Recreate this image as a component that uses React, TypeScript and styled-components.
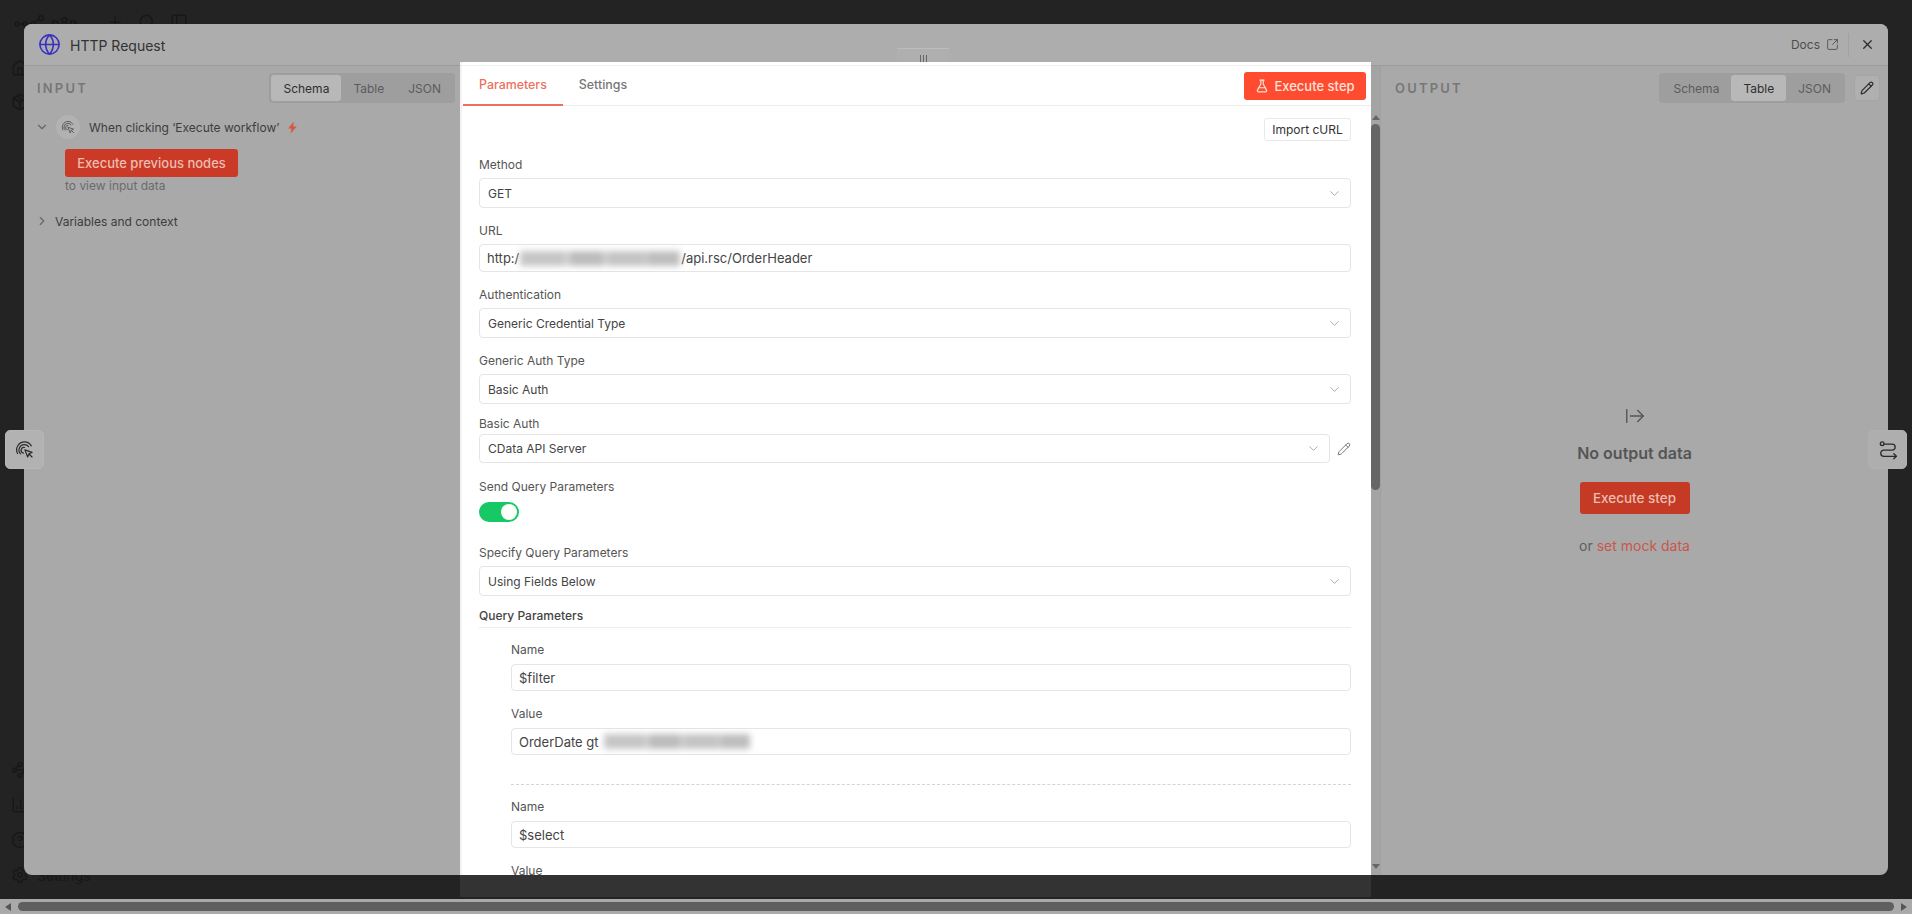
import React from 'react';
import styled, { createGlobalStyle } from 'styled-components';
import {
  ArrowRightFromLine,
  BarChart3,
  ChevronDown,
  ChevronRight,
  CircleHelp,
  FlaskConical,
  Globe,
  Home,
  Package,
  PanelLeft,
  Pencil,
  Plus,
  Search,
  Settings,
  SquareArrowOutUpRight,
  Waypoints,
  X,
} from 'lucide-react';

const Global = createGlobalStyle`
  html, body { margin: 0; padding: 0; height: 100%; overflow: hidden; background: #232323; }
  body { font-family: Inter, "Liberation Sans", sans-serif; }
  * { box-sizing: border-box; }
`;

const Page = styled.div`
  width: 1912px;
  height: 914px;
  display: flex;
  flex-direction: column;
  overflow: hidden;
`;

const Stage = styled.div`
  position: relative;
  flex: 1;
  background: #232323;
`;

/* dimmed application behind the modal */
const Sidebar = styled.aside`
  width: 200px;
  height: 100%;
  padding: 12px 0 15px 11px;
  display: flex;
  flex-direction: column;
  color: #181818;
`;

const SideTop = styled.div`
  display: flex;
  align-items: center;
  height: 20px;
  gap: 14px;
`;

const Brand = styled.div`
  display: flex;
  align-items: center;
  gap: 3px;
  width: 81px;
  padding-left: 3px;
  font-size: 14px;
  font-weight: 700;
`;

const SideNav = styled.nav`
  margin-top: 27px;
  display: flex;
  flex-direction: column;
  gap: 16px;
`;

const SideBottom = styled.nav`
  margin-top: auto;
  display: flex;
  flex-direction: column;
  gap: 17px;
`;

const SideItem = styled.div`
  display: flex;
  align-items: center;
  gap: 8px;
  height: 18px;
  font-size: 14px;
`;

/* modal */
const Modal = styled.section`
  position: absolute;
  left: 24px;
  top: 24px;
  right: 24px;
  bottom: 24px;
  display: flex;
  flex-direction: column;
  background: #a9a9a9;
  border-radius: 8px;
`;

const ModalHeader = styled.header`
  height: 42px;
  flex: none;
  display: flex;
  align-items: center;
  padding: 0 13px 0 14px;
  background: #adadad;
  border-bottom: 1px solid #9b9b9b;
  border-radius: 8px 8px 0 0;
`;

const ModalTitle = styled.h1`
  margin: 1px 0 0 9px;
  font-size: 14px;
  font-weight: 400;
  color: #333;
  flex: 1;
`;

const DocsLink = styled.a`
  display: flex;
  align-items: center;
  gap: 6px;
  font-size: 12px;
  color: #4d4d4d;
`;

const HeaderRule = styled.span`
  width: 1px;
  height: 24px;
  background: #a2a2a2;
  margin: 0 11px 0 9px;
`;

const ModalBody = styled.div`
  flex: 1;
  display: flex;
  min-height: 0;
`;

const SidePanel = styled.div`
  width: 436px;
  flex: none;
  display: flex;
  flex-direction: column;
`;

const OutputPanel = styled.div`
  flex: 1;
  display: flex;
  flex-direction: column;
`;

const PanelHead = styled.div<{ $right?: boolean }>`
  display: flex;
  align-items: center;
  justify-content: space-between;
  height: 30px;
  margin-top: 7px;
  padding: ${(p) => (p.$right ? '0 8px 0 14px' : '0 5px 0 13px')};
`;

const PanelLabel = styled.div`
  font-size: 13px;
  font-weight: 600;
  letter-spacing: 2.2px;
  color: #777;
`;

const HeadTools = styled.div`
  display: flex;
  align-items: center;
  gap: 9px;
`;

const Segmented = styled.div`
  display: flex;
  height: 30px;
  padding: 2px;
  background: #9e9e9e;
  border-radius: 4px;
`;

const Segment = styled.button<{ $active?: boolean }>`
  height: 26px;
  padding: 0 12px;
  border: 0;
  border-radius: 3px;
  font: 400 12px Inter, sans-serif;
  background: ${(p) => (p.$active ? '#b8b8b8' : 'transparent')};
  color: ${(p) => (p.$active ? '#2f2f2f' : '#5c5c5c')};
`;

const IconButton = styled.button`
  width: 26px;
  height: 26px;
  display: flex;
  align-items: center;
  justify-content: center;
  border: 1px solid #a6a6a6;
  border-radius: 4px;
  padding: 0;
  background: #b0b0b0;
  color: #2d2d2d;
`;

const TreeRow = styled.div<{ $top: number }>`
  display: flex;
  align-items: center;
  height: 24px;
  margin-top: ${(p) => p.$top}px;
  padding-left: 11px;
  font-size: 12px;
  color: #3d3d3d;
`;

const Caret = styled.span`
  display: flex;
  width: 14px;
  margin-right: 7px;
  color: #666;
`;

const CaretTight = styled(Caret)`
  margin-right: 6px;
`;

const NodeBadge = styled.span`
  width: 24px;
  height: 24px;
  border-radius: 50%;
  background: #b2b2b2;
  display: flex;
  align-items: center;
  justify-content: center;
  margin-right: 9px;
  color: #555;
`;

const Bolt = styled.span`
  display: flex;
  margin-left: 7px;
  color: #d9573f;
`;

const DimButton = styled.button`
  display: block;
  height: 28px;
  padding: 0 12px;
  border: 0;
  border-radius: 3px;
  background: #cb3a26;
  color: #edbdb1;
  font: 500 13px Inter, sans-serif;
`;

const RunPrevious = styled(DimButton)`
  margin: 10px 0 0 41px;
  width: 173px;
  padding: 0;
`;

const Hint = styled.div`
  margin: 1px 0 0 41px;
  font-size: 12px;
  line-height: 16px;
  color: #6b6b6b;
`;

const Empty = styled.div`
  flex: 1;
  display: flex;
  flex-direction: column;
  align-items: center;
  padding-top: 302px;
  color: #555;
`;

const EmptyTitle = styled.div`
  margin-top: 16px;
  font-size: 16px;
  font-weight: 600;
  line-height: 20px;
  color: #555;
`;

const RunStep = styled(DimButton)`
  margin-top: 19px;
  width: 110px;
  height: 32px;
  padding: 0;
  background: #c43a24;
  font-size: 13.5px;
`;

const MockRow = styled.div`
  margin-top: 23px;
  font-size: 14px;
  line-height: 18px;
  color: #5e5e5e;
`;

const MockLink = styled.span`
  color: #c9574b;
`;

/* center panel */
const Gutter = styled.div`
  position: relative;
  width: 921px;
  flex: none;
  border-right: 1px solid #a0a0a0;
  background: #a4a4a4;
`;

const ParamPanel = styled.div`
  position: absolute;
  left: 0;
  top: -4px;
  width: 911px;
  height: 813px;
  display: flex;
  flex-direction: column;
  background: #fff;
  border-left: 2px solid #f3f3f3;
  z-index: 2;

  &::after {
    content: '';
    position: absolute;
    left: -2px;
    right: 0;
    top: 100%;
    height: 22px;
    background: #333;
  }
`;

const DragHandle = styled.div`
  position: absolute;
  left: 435px;
  top: -14px;
  width: 52px;
  height: 14px;
  display: flex;
  justify-content: center;
  gap: 2px;
  padding-top: 6px;
  background: #afafaf;
  border-top: 1px solid #bcbcbc;
`;

const HandleBar = styled.span`
  width: 1px;
  height: 7px;
  background: #666;
`;

const ParamHead = styled.div`
  height: 44px;
  flex: none;
  display: flex;
  align-items: stretch;
  padding: 3px 0 0 1px;
  border-bottom: 1px solid #ececec;
  position: relative;

  &::before {
    content: '';
    position: absolute;
    left: 0;
    right: 0;
    top: 3px;
    height: 1px;
    background: #f1f1f1;
  }
`;

const ParamTab = styled.div<{ $active?: boolean }>`
  display: flex;
  align-items: center;
  padding: 0 16px;
  margin-bottom: -1px;
  font-size: 12.4px;
  font-weight: 500;
  color: ${(p) => (p.$active ? '#ee6f5d' : '#777')};
  border-bottom: 2px solid ${(p) => (p.$active ? '#ee6f5d' : 'transparent')};
`;

const ExecuteButton = styled.button`
  margin: 7px 5px 0 auto;
  width: 122px;
  height: 28px;
  display: flex;
  align-items: center;
  justify-content: center;
  gap: 5px;
  border: 0;
  border-radius: 3px;
  background: #ff4b2f;
  color: #fde3dc;
  font: 500 13px Inter, sans-serif;
`;

const Form = styled.div`
  flex: 1;
  min-height: 0;
  overflow: hidden;
  padding: 12px 20px 0 17px;
  display: flex;
  flex-direction: column;
`;

const ImportRow = styled.div`
  display: flex;
  justify-content: flex-end;
`;

const ImportButton = styled.button`
  width: 87px;
  height: 23px;
  padding: 0;
  border: 1px solid #e8e8e8;
  border-radius: 3px;
  background: #fff;
  color: #333;
  font: 400 12px Inter, sans-serif;
`;

const Label = styled.label<{ $top: number; $gap?: number; $indent?: boolean; $strong?: boolean }>`
  display: block;
  flex: none;
  height: 18px;
  line-height: 18px;
  font-size: 12px;
  margin-top: ${(p) => p.$top}px;
  margin-bottom: ${(p) => p.$gap ?? 4}px;
  margin-left: ${(p) => (p.$indent ? 32 : 0)}px;
  font-weight: ${(p) => (p.$strong ? 500 : 400)};
  color: ${(p) => (p.$strong ? '#444' : '#555')};
`;

const Control = styled.div<{ $h: number; $indent?: boolean; $inputText?: boolean }>`
  flex: 1;
  flex-shrink: 0;
  display: flex;
  align-items: center;
  min-height: ${(p) => p.$h}px;
  max-height: ${(p) => p.$h}px;
  margin-left: ${(p) => (p.$indent ? 32 : 0)}px;
  padding: 0 9px 0 ${(p) => (p.$inputText ? 7 : 8)}px;
  border: 1px solid #e5e5e5;
  border-radius: 4px;
  background: #fff;
  font-size: ${(p) => (p.$inputText ? 13 : 12)}px;
  color: #444;
`;

const ControlText = styled.span`
  flex: 1;
  display: flex;
  align-items: center;
`;

const Blurred = styled.span<{ $w: number; $left: number }>`
  width: ${(p) => p.$w}px;
  height: 15px;
  margin: 0 1px 0 ${(p) => p.$left}px;
  background: linear-gradient(
    90deg,
    #c6c6c6 0 28%,
    #d6d6d6 28% 31%,
    #bcbcbc 31% 52%,
    #d2d2d2 52% 55%,
    #c4c4c4 55% 78%,
    #cfcfcf 78% 80%,
    #bebebe 80% 100%
  );
  filter: blur(3.2px);
`;

const ChevronSlot = styled.span`
  display: flex;
  color: #999;
  margin-right: -1px;
`;

const WithAction = styled.div`
  display: flex;
  align-items: center;
  gap: 7px;
  flex: none;
`;

const ActionIcon = styled.span`
  display: flex;
  color: #666;
`;

const Toggle = styled.div`
  flex: none;
  width: 40px;
  height: 20px;
  display: flex;
  justify-content: flex-end;
  align-items: center;
  padding-right: 2px;
  border-radius: 10px;
  background: #17c964;
`;

const Knob = styled.span`
  width: 16px;
  height: 16px;
  border-radius: 50%;
  background: #fff;
`;

const SectionRule = styled.div`
  flex: none;
  height: 1px;
  margin-top: -2px;
  background: #ececec;
`;

const DashRule = styled.div`
  flex: none;
  margin: 29px 0 0 32px;
  border-top: 1px dashed #d4d4d4;
`;

const ScrollRail = styled.div`
  position: absolute;
  top: 53px;
  right: -9px;
  width: 9px;
  bottom: 6px;
  display: flex;
  flex-direction: column;
  align-items: center;
`;

const RailArrow = styled.span<{ $down?: boolean }>`
  width: 0;
  height: 0;
  flex: none;
  border-left: 4px solid transparent;
  border-right: 4px solid transparent;
  border-bottom: ${(p) => (p.$down ? 0 : '5px solid #666')};
  border-top: ${(p) => (p.$down ? '5px solid #666' : 0)};
`;

const RailThumb = styled.span`
  width: 9px;
  height: 366px;
  margin: 4px 0 auto;
  background: #666;
  border-radius: 5px;
`;

const FloatHandle = styled.button<{ $side: 'left' | 'right' }>`
  position: absolute;
  top: 430px;
  ${(p) => (p.$side === 'left' ? 'left: 5px;' : 'right: 5px;')}
  width: 39px;
  height: 39px;
  display: flex;
  align-items: center;
  justify-content: center;
  padding: 0;
  border: 1px solid ${(p) => (p.$side === 'left' ? '#b6b6b6' : '#b0b0b0')};
  border-radius: 5px;
  background: ${(p) => (p.$side === 'left' ? '#b2b2b2' : '#aeaeae')};
  color: #2b2b2b;
  z-index: 3;
`;

/* page scrollbar */
const HBar = styled.div`
  flex: none;
  height: 15px;
  display: flex;
  align-items: center;
  padding: 0 5px;
  background: #a9a9a9;
  gap: 5px;
`;

const HArrow = styled.span<{ $right?: boolean }>`
  width: 0;
  height: 0;
  flex: none;
  border-top: 4px solid transparent;
  border-bottom: 4px solid transparent;
  border-right: ${(p) => (p.$right ? 0 : '6px solid #555')};
  border-left: ${(p) => (p.$right ? '6px solid #555' : 0)};
`;

const HThumb = styled.span`
  flex: 1;
  height: 9px;
  margin: 0 2px;
  background: #5f5f5f;
  border-radius: 5px;
`;

const TriggerIcon = ({ size, weight = 1.6 }: { size: number; weight?: number }) => (
  <svg width={size} height={size} viewBox="0 0 24 24" fill="none" stroke="currentColor" strokeWidth={weight} strokeLinecap="round" strokeLinejoin="round">
    <path d="M3.2 17a10 10 0 0 1 8.8-14.6 10 10 0 0 1 8.6 5" />
    <path d="M7 17.5a6.8 6.8 0 0 1 5-11.6 6.8 6.8 0 0 1 5.2 2.6" />
    <path d="M10.6 16.5a3.4 3.4 0 0 1 1.4-7" />
    <path d="m12.5 12.5 9 3.2-3.8 1.7-1.7 4z" />
    <path d="m18 18 3.5 3.5" />
  </svg>
);

const RouteIcon = () => (
  <svg width={20} height={20} viewBox="0 0 24 24" fill="none" stroke="currentColor" strokeWidth={1.6} strokeLinecap="round" strokeLinejoin="round">
    <circle cx="5" cy="4.5" r="2.2" />
    <path d="M8 5h9a3.6 3.6 0 0 1 0 7.2H7a3.7 3.7 0 0 0 0 7.4h15" />
    <path d="m19 16.5 3 3-3 3" />
  </svg>
);

const BoltIcon = () => (
  <svg width={13} height={13} viewBox="0 0 12 12" fill="currentColor">
    <path d="M7.2 0.5 2 7h3L4.2 11.5 10 5H6.7z" />
  </svg>
);

const LogoMark = () => (
  <svg width={34} height={16} viewBox="0 0 34 16" fill="none" stroke="currentColor" strokeWidth={1.6}>
    <circle cx="3" cy="10" r="2" />
    <circle cx="11" cy="10" r="2" />
    <circle cx="19" cy="10" r="2" />
    <circle cx="27" cy="4" r="2.4" />
    <path d="M5 10h4M13 10h4M20.5 8.6 25 5" />
  </svg>
);

const Chevron = () => (
  <ChevronSlot>
    <ChevronDown size={15} strokeWidth={1.3} />
  </ChevronSlot>
);

export default function App() {
  return (
    <Page>
      <Global />
      <Stage>
        <Sidebar>
          <SideTop>
            <Brand>
              <LogoMark />
              n8n
            </Brand>
            <Plus size={18} />
            <Search size={18} />
            <PanelLeft size={18} />
          </SideTop>
          <SideNav>
            <SideItem>
              <Home size={18} />
            </SideItem>
            <SideItem>
              <Package size={18} />
            </SideItem>
          </SideNav>
          <SideBottom>
            <SideItem>
              <Waypoints size={18} />
            </SideItem>
            <SideItem>
              <BarChart3 size={18} />
            </SideItem>
            <SideItem>
              <CircleHelp size={18} />
            </SideItem>
            <SideItem>
              <Settings size={18} />
              Settings
            </SideItem>
          </SideBottom>
        </Sidebar>

        <FloatHandle $side="left">
          <TriggerIcon size={19} weight={1.5} />
        </FloatHandle>
        <FloatHandle $side="right">
          <RouteIcon />
        </FloatHandle>

        <Modal>
          <ModalHeader>
            <Globe size={23} color="#3a31c4" strokeWidth={1.7} />
            <ModalTitle>HTTP Request</ModalTitle>
            <DocsLink>
              Docs
              <SquareArrowOutUpRight size={13} strokeWidth={1.6} />
            </DocsLink>
            <HeaderRule />
            <X size={15} color="#2a2a2a" />
          </ModalHeader>
          <ModalBody>
            <SidePanel>
              <PanelHead>
                <PanelLabel>INPUT</PanelLabel>
                <Segmented>
                  <Segment $active>Schema</Segment>
                  <Segment>Table</Segment>
                  <Segment>JSON</Segment>
                </Segmented>
              </PanelHead>
              <TreeRow $top={12}>
                <Caret>
                  <ChevronDown size={14} />
                </Caret>
                <NodeBadge>
                  <TriggerIcon size={14} />
                </NodeBadge>
                When clicking ‘Execute workflow’
                <Bolt>
                  <BoltIcon />
                </Bolt>
              </TreeRow>
              <RunPrevious>Execute previous nodes</RunPrevious>
              <Hint>to view input data</Hint>
              <TreeRow $top={15}>
                <CaretTight>
                  <ChevronRight size={14} />
                </CaretTight>
                Variables and context
              </TreeRow>
            </SidePanel>

            <Gutter>
              <ParamPanel>
                <DragHandle>
                  <HandleBar />
                  <HandleBar />
                  <HandleBar />
                </DragHandle>
                <ParamHead>
                  <ParamTab $active>Parameters</ParamTab>
                  <ParamTab>Settings</ParamTab>
                  <ExecuteButton>
                    <FlaskConical size={14} />
                    Execute step
                  </ExecuteButton>
                </ParamHead>
                <Form>
                  <ImportRow>
                    <ImportButton>Import cURL</ImportButton>
                  </ImportRow>

                  <Label $top={15}>Method</Label>
                  <Control $h={30}>
                    <ControlText>GET</ControlText>
                    <Chevron />
                  </Control>

                  <Label $top={14}>URL</Label>
                  <Control $h={28} $inputText>
                    <ControlText>
                      http:/
                      <Blurred $w={160} $left={1} />
                      /api.rsc/OrderHeader
                    </ControlText>
                  </Control>

                  <Label $top={14}>Authentication</Label>
                  <Control $h={30}>
                    <ControlText>Generic Credential Type</ControlText>
                    <Chevron />
                  </Control>

                  <Label $top={14}>Generic Auth Type</Label>
                  <Control $h={30}>
                    <ControlText>Basic Auth</ControlText>
                    <Chevron />
                  </Control>

                  <Label $top={11} $gap={1}>Basic Auth</Label>
                  <WithAction>
                    <Control $h={29}>
                      <ControlText>CData API Server</ControlText>
                      <Chevron />
                    </Control>
                    <ActionIcon>
                      <Pencil size={14} strokeWidth={1.5} />
                    </ActionIcon>
                  </WithAction>

                  <Label $top={15} $gap={6}>Send Query Parameters</Label>
                  <Toggle>
                    <Knob />
                  </Toggle>

                  <Label $top={22}>Specify Query Parameters</Label>
                  <Control $h={30}>
                    <ControlText>Using Fields Below</ControlText>
                    <Chevron />
                  </Control>

                  <Label $top={11} $strong>Query Parameters</Label>
                  <SectionRule />

                  <Label $top={13} $gap={5} $indent>Name</Label>
                  <Control $h={27} $indent $inputText>
                    <ControlText>$filter</ControlText>
                  </Control>

                  <Label $top={14} $gap={5} $indent>Value</Label>
                  <Control $h={27} $indent $inputText>
                    <ControlText>
                      OrderDate gt
                      <Blurred $w={146} $left={5} />
                    </ControlText>
                  </Control>

                  <DashRule />

                  <Label $top={13} $gap={5} $indent>Name</Label>
                  <Control $h={27} $indent $inputText>
                    <ControlText>$select</ControlText>
                  </Control>

                  <Label $top={14} $indent>Value</Label>
                </Form>
                <ScrollRail>
                  <RailArrow />
                  <RailThumb />
                  <RailArrow $down />
                </ScrollRail>
              </ParamPanel>
            </Gutter>

            <OutputPanel>
              <PanelHead $right>
                <PanelLabel>OUTPUT</PanelLabel>
                <HeadTools>
                  <Segmented>
                    <Segment>Schema</Segment>
                    <Segment $active>Table</Segment>
                    <Segment>JSON</Segment>
                  </Segmented>
                  <IconButton>
                    <Pencil size={14} />
                  </IconButton>
                </HeadTools>
              </PanelHead>
              <Empty>
                <ArrowRightFromLine size={22} strokeWidth={1.5} />
                <EmptyTitle>No output data</EmptyTitle>
                <RunStep>Execute step</RunStep>
                <MockRow>
                  or <MockLink>set mock data</MockLink>
                </MockRow>
              </Empty>
            </OutputPanel>
          </ModalBody>
        </Modal>
      </Stage>
      <HBar>
        <HArrow />
        <HThumb />
        <HArrow $right />
      </HBar>
    </Page>
  );
}
